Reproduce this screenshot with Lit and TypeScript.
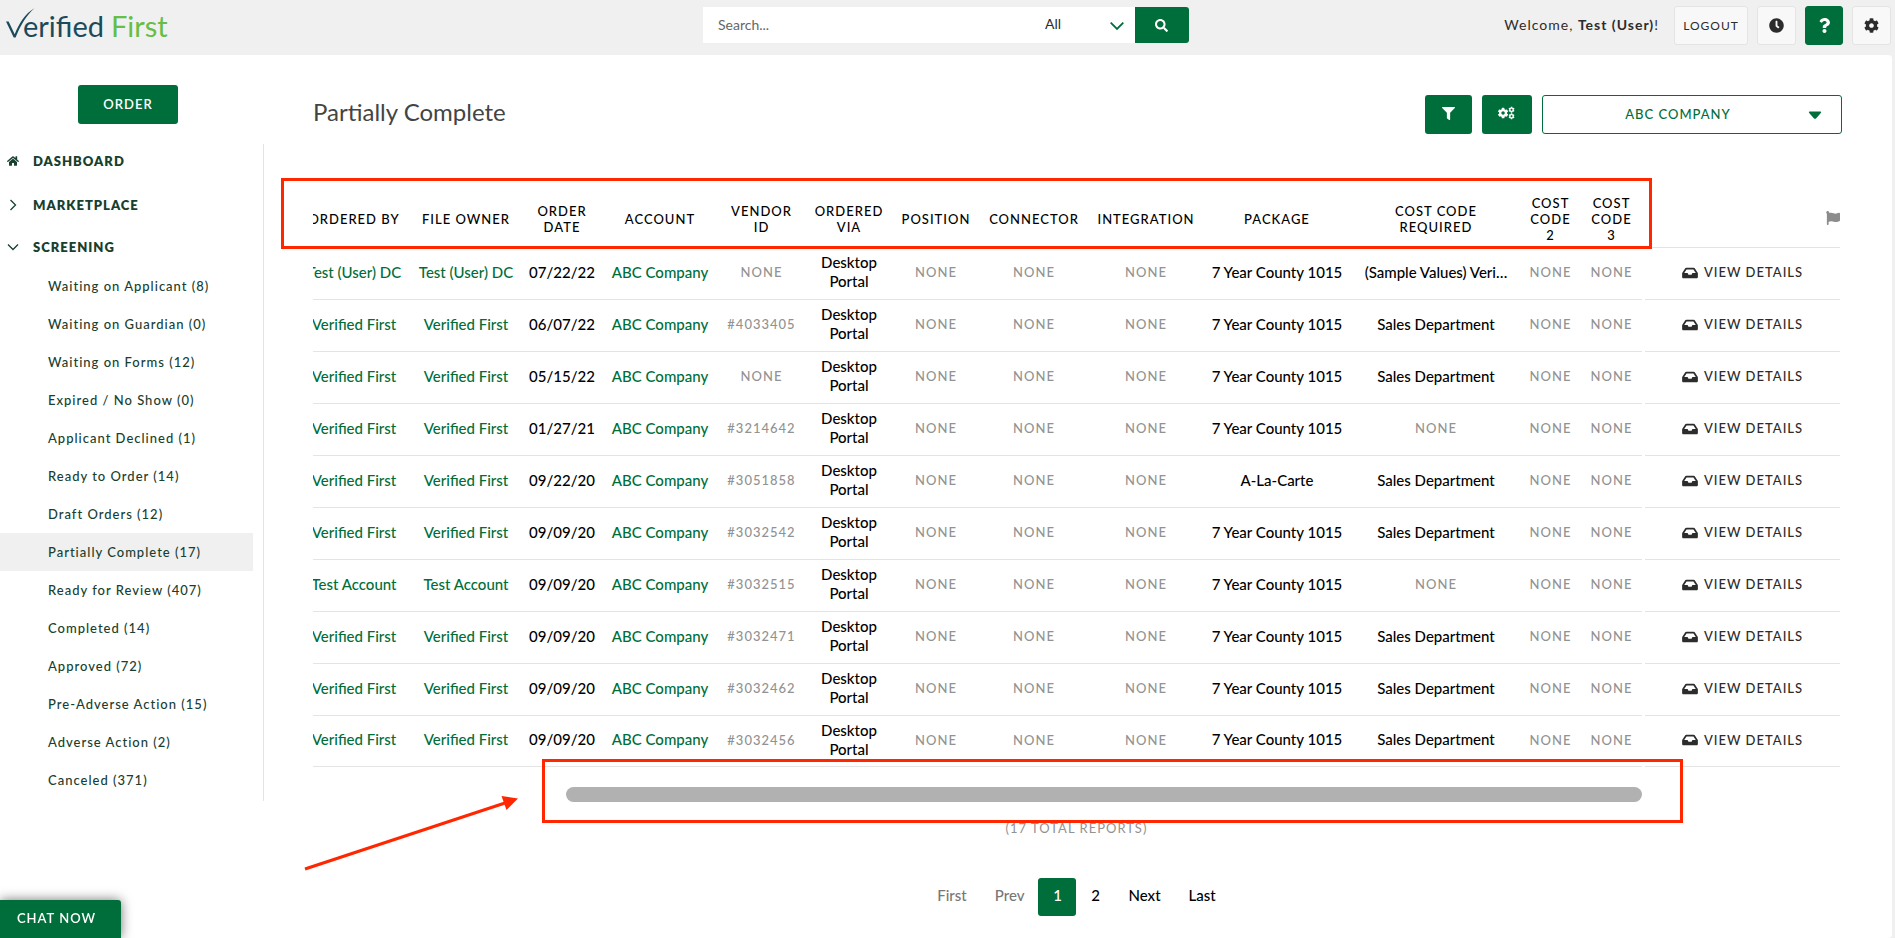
import { LitElement, html, css, svg } from "lit";
import { customElement, property } from "lit/decorators.js";
import { classMap } from "lit/directives/class-map.js";

const COG =
  "M487.4 315.7l-42.6-24.6c4.3-23.2 4.3-47 0-70.2l42.6-24.6c4.9-2.8 7.1-8.6 5.5-14-11.1-35.6-30-67.8-54.7-94.6-3.8-4.1-10-5.1-14.8-2.3L380.8 110c-17.9-15.4-38.5-27.3-60.8-35.1V25.8c0-5.6-3.9-10.5-9.4-11.7-36.7-8.2-74.3-7.8-109.2 0-5.5 1.2-9.4 6.1-9.4 11.7V75c-22.2 7.9-42.8 19.8-60.8 35.1L88.7 85.5c-4.9-2.8-11-1.9-14.8 2.3-24.7 26.7-43.6 58.9-54.7 94.6-1.7 5.4.6 11.2 5.5 14L67.3 221c-4.3 23.2-4.3 47 0 70.2l-42.6 24.6c-4.9 2.8-7.1 8.6-5.5 14 11.1 35.6 30 67.8 54.7 94.6 3.8 4.1 10 5.1 14.8 2.3l42.6-24.6c17.9 15.4 38.5 27.3 60.8 35.1v49.2c0 5.6 3.9 10.5 9.4 11.7 36.7 8.2 74.3 7.8 109.2 0 5.5-1.2 9.4-6.1 9.4-11.7v-49.2c22.2-7.9 42.8-19.8 60.8-35.1l42.6 24.6c4.9 2.8 11 1.9 14.8-2.3 24.7-26.7 43.6-58.9 54.7-94.6 1.5-5.5-.7-11.3-5.6-14.1zM256 336c-44.1 0-80-35.9-80-80s35.9-80 80-80 80 35.9 80 80-35.9 80-80 80z";

const ICONS: Record<string, { box: string; body: unknown }> = {
  search: {
    box: "0 0 512 512",
    body: svg`<path d="M505 442.7L405.3 343c-4.5-4.5-10.6-7-17-7H372c27.6-35.3 44-79.7 44-128C416 93.1 322.9 0 208 0S0 93.1 0 208s93.1 208 208 208c48.3 0 92.7-16.4 128-44v16.3c0 6.4 2.5 12.5 7 17l99.7 99.7c9.4 9.4 24.6 9.4 33.9 0l28.3-28.3c9.4-9.4 9.4-24.6.1-34zM208 336c-70.7 0-128-57.2-128-128 0-70.7 57.2-128 128-128 70.7 0 128 57.2 128 128 0 70.7-57.2 128-128 128z"/>`,
  },
  cog: { box: "0 0 512 512", body: svg`<path d=${COG} />` },
  cogs: {
    box: "0 0 640 512",
    body: svg`<g transform="translate(-14 52) scale(.8)"><path d=${COG} /></g>
      <g transform="translate(392 16) scale(.46)"><path d=${COG} /></g>
      <g transform="translate(392 262) scale(.46)"><path d=${COG} /></g>`,
  },
  clock: {
    box: "0 0 512 512",
    body: svg`<path d="M256,8C119,8,8,119,8,256S119,504,256,504,504,393,504,256,393,8,256,8Zm92.49,313h0l-20,25a16,16,0,0,1-22.49,2.5h0l-67-49.72a40,40,0,0,1-15-31.23V112a16,16,0,0,1,16-16h32a16,16,0,0,1,16,16V256l58,42.5A16,16,0,0,1,348.49,321Z"/>`,
  },
  question: {
    box: "0 0 384 512",
    body: svg`<path d="M202.021 0C122.202 0 70.503 32.703 29.914 91.026c-7.363 10.58-5.093 25.086 5.178 32.874l43.138 32.709c10.373 7.865 25.132 6.026 33.253-4.148 25.049-31.381 43.63-49.449 82.757-49.449 30.764 0 68.816 19.799 68.816 49.631 0 22.552-18.617 34.134-48.993 51.164-35.423 19.86-82.299 44.576-82.299 106.405V320c0 13.255 10.745 24 24 24h72.471c13.255 0 24-10.745 24-24v-5.773c0-42.86 125.268-44.645 125.268-160.627C377.504 66.256 286.902 0 202.021 0zM192 373.459c-38.196 0-69.271 31.075-69.271 69.271 0 38.195 31.075 69.27 69.271 69.27s69.271-31.075 69.271-69.271-31.075-69.27-69.271-69.27z"/>`,
  },
  filter: {
    box: "0 0 512 512",
    body: svg`<path d="M487.976 0H24.028C2.71 0-8.047 25.866 7.058 40.971L192 225.941V432c0 7.831 3.821 15.17 10.237 19.662l80 55.98C298.02 518.69 320 507.493 320 487.98V225.941l184.947-184.97C520.021 25.896 509.338 0 487.976 0z"/>`,
  },
  flag: {
    box: "0 0 512 512",
    body: svg`<path d="M349.565 98.783C295.978 98.783 251.721 64 184.348 64c-24.955 0-47.309 4.384-68.045 12.013a55.947 55.947 0 0 0 3.586-23.562C118.117 24.015 94.806 1.206 66.338.048 34.345-1.254 8 24.296 8 56c0 19.026 9.497 35.825 24 45.945V488c0 13.255 10.745 24 24 24h16c13.255 0 24-10.745 24-24v-94.4c28.311-12.064 63.582-22.122 114.435-22.122 53.588 0 97.844 34.783 165.217 34.783 48.169 0 86.667-16.294 122.505-40.858C506.84 359.452 512 349.571 512 339.045v-243.1c0-23.393-24.269-38.87-45.485-29.016-34.338 15.948-76.454 31.854-116.95 31.854z"/>`,
  },
  inbox: {
    box: "0 0 576 512",
    body: svg`<path d="M567.938 243.908L462.25 85.374A48.003 48.003 0 0 0 422.311 64H153.689a48 48 0 0 0-39.938 21.374L8.062 243.908A47.994 47.994 0 0 0 0 270.533V400c0 26.51 21.49 48 48 48h480c26.51 0 48-21.49 48-48V270.533a47.994 47.994 0 0 0-8.062-26.625zM162.252 128h251.497l85.333 128H376l-32 64H232l-32-64H76.918l85.334-128z"/>`,
  },
  home: {
    box: "0 0 576 512",
    body: svg`<path d="M280.37 148.26L96 300.11V464a16 16 0 0 0 16 16l112.06-.29a16 16 0 0 0 15.92-16V368a16 16 0 0 1 16-16h64a16 16 0 0 1 16 16v95.64a16 16 0 0 0 16 16.05L464 480a16 16 0 0 0 16-16V300L295.67 148.26a12.19 12.19 0 0 0-15.3 0zM571.6 251.47L488 182.56V44.05a12 12 0 0 0-12-12h-56a12 12 0 0 0-12 12v72.61L318.47 43a48 48 0 0 0-61 0L4.34 251.47a12 12 0 0 0-1.6 16.9l25.5 31A12 12 0 0 0 45.15 301l235.22-193.74a12.19 12.19 0 0 1 15.3 0L530.9 301a12 12 0 0 0 16.9-1.6l25.5-31a12 12 0 0 0-1.7-16.93z"/>`,
  },
  right: {
    box: "0 0 12 12",
    body: svg`<path d="M3.5 1L8.5 6L3.5 11" fill="none" stroke="currentColor" stroke-width="1.3"/>`,
  },
  down: {
    box: "0 0 12 12",
    body: svg`<path d="M1 3.5L6 8.5L11 3.5" fill="none" stroke="currentColor" stroke-width="1.3"/>`,
  },
  chevron: {
    box: "0 0 14 14",
    body: svg`<path d="M.7 3.7L7 10L13.3 3.7" fill="none" stroke="currentColor" stroke-width="1.8"/>`,
  },
  caret: {
    box: "0 0 14 14",
    body: svg`<path d="M1.5 3.500h11q1.200 .4 .3 1.500l-4.800 5.400q-1 .8 -2 0l-4.800 -5.400q-.9 -1.100 .3 -1.500z"/>`,
  },
};

@customElement("vf-icon")
class VfIcon extends LitElement {
  @property() name = "";
  static styles = css`
    :host {
      display: inline-flex;
      width: 14px;
      height: 14px;
      flex: none;
    }
    .glyph {
      width: 100%;
      height: 100%;
      fill: currentColor;
    }
  `;
  render() {
    const icon = ICONS[this.name];
    return html`<svg class="glyph" viewBox=${icon.box} aria-hidden="true">${icon.body}</svg>`;
  }
}

const shared = css`
  * {
    box-sizing: border-box;
  }
  a {
    color: inherit;
    text-decoration: none;
  }
  button,
  input,
  select {
    font: inherit;
    color: inherit;
    letter-spacing: inherit;
    margin: 0;
    border: 0;
    padding: 0;
    border-radius: 0;
    background: none;
    appearance: none;
    outline: none;
  }
`;

@customElement("vf-header")
class VfHeader extends LitElement {
  static styles = [
    shared,
    css`
      :host {
        display: grid;
        grid-template-columns: 1fr 486px 1fr;
        align-items: start;
        height: 55px;
        padding: 6px 3px 0 0;
        background: #f0f0f0;
        color: #2c2c2c;
      }
      .logo {
        display: flex;
        align-items: flex-start;
        padding-left: 5px;
        font-size: 29px;
        line-height: 40px;
        color: #1b4a5c;
        justify-self: start;
      }
      .mark {
        width: 30px;
        height: 34px;
        margin-right: -12px;
      }
      .first {
        color: #67bd45;
        padding-left: 7px;
      }
      .search {
        display: flex;
        height: 36px;
        margin-top: 1px;
        background: #fff;
        border-radius: 0 3px 3px 0;
        overflow: hidden;
      }
      .query {
        flex: 1;
        min-width: 0;
        padding: 0 15px 2px;
      }
      .query::placeholder {
        color: #666;
        opacity: 1;
      }
      .scope {
        display: grid;
        align-items: center;
        width: 104px;
      }
      .scope > * {
        grid-area: 1 / 1;
      }
      .scope select {
        height: 36px;
        padding: 0 30px 4px 14px;
      }
      .scope vf-icon {
        justify-self: end;
        margin: 2px 11px 0 0;
        color: #006e3a;
        pointer-events: none;
      }
      .go {
        display: grid;
        place-items: center;
        width: 54px;
        background: #006e3a;
        color: #fff;
      }
      .go vf-icon {
        width: 13px;
        height: 13px;
        margin-right: 2px;
      }
      .tools {
        display: flex;
        justify-content: flex-end;
        gap: 9px;
        padding-right: 1px;
        letter-spacing: 1px;
      }
      .welcome {
        line-height: 38px;
        padding-right: 6px;
      }
      .tool {
        display: grid;
        place-items: center;
        width: 39px;
        height: 39px;
        border: 1px solid #e4e4e4;
        border-radius: 3px;
        background: #f8f8f8;
      }
      .tool vf-icon {
        width: 15px;
        height: 15px;
      }
      .tool.wide {
        width: 74px;
        font-size: 12px;
      }
      .tool.help {
        width: 38px;
        background: #006e3a;
        border-color: #006e3a;
        color: #fff;
      }
    `,
  ];
  render() {
    return html`
      <a class="logo" href="#" aria-label="Verified First">
        <svg class="mark" viewBox="0 0 30 34" aria-hidden="true">
          <path d="M1 15.5H3.6L9.7 28.2C14 17.5 20 7.5 29.5 2.2C22 8.5 15.500 19 10.600 31.500H8.700Z" fill="#1b4a5c" />
        </svg>
        <span>erified</span><span class="first">First</span>
      </a>
      <form class="search" role="search">
        <input class="query" type="text" placeholder="Search..." aria-label="Search" />
        <div class="scope">
          <select aria-label="Search in">
            <option>All</option>
          </select>
          <vf-icon name="chevron"></vf-icon>
        </div>
        <button class="go" type="button" aria-label="Search"><vf-icon name="search"></vf-icon></button>
      </form>
      <div class="tools">
        <span class="welcome">Welcome, <b>Test (User)</b>!</span>
        <button class="tool wide">LOGOUT</button>
        <button class="tool" aria-label="History"><vf-icon name="clock"></vf-icon></button>
        <button class="tool help" aria-label="Help"><vf-icon name="question"></vf-icon></button>
        <button class="tool" aria-label="Settings"><vf-icon name="cog"></vf-icon></button>
      </div>
    `;
  }
}

const SCREENING: [string, number][] = [
  ["Waiting on Applicant", 8],
  ["Waiting on Guardian", 0],
  ["Waiting on Forms", 12],
  ["Expired / No Show", 0],
  ["Applicant Declined", 1],
  ["Ready to Order", 14],
  ["Draft Orders", 12],
  ["Partially Complete", 17],
  ["Ready for Review", 407],
  ["Completed", 14],
  ["Approved", 72],
  ["Pre-Adverse Action", 15],
  ["Adverse Action", 2],
  ["Canceled", 371],
];

@customElement("vf-sidebar")
class VfSidebar extends LitElement {
  @property() current = "";
  static styles = [
    shared,
    css`
      :host {
        display: flex;
        flex-direction: column;
        width: 264px;
        flex: none;
        padding-top: 30px;
        color: #17402f;
        letter-spacing: 1px;
        font-size: 13px;
        font-weight: 500;
      }
      .order {
        align-self: center;
        width: 100px;
        height: 39px;
        margin: 0 8px 20px 0;
        padding-bottom: 2px;
        border-radius: 3px;
        background: #006e3a;
        color: #fff;
        font-weight: 600;
      }
      nav {
        border-right: 1px solid #e4e4e4;
        padding-bottom: 2px;
      }
      .group {
        display: flex;
        align-items: center;
        gap: 14px;
        height: 44px;
        padding: 0 7px;
        font-weight: 800;
      }
      .group:first-child {
        height: 34px;
        margin-bottom: 5px;
      }
      .group.open {
        height: 40px;
      }
      .group vf-icon {
        width: 12px;
        height: 12px;
      }
      ul {
        list-style: none;
        margin: 0 10px 0 0;
        padding: 0;
      }
      .item {
        display: block;
        line-height: 38px;
        padding-left: 48px;
      }
      .item.active {
        background: #f0f0f0;
      }
    `,
  ];
  render() {
    return html`
      <button class="order">ORDER</button>
      <nav>
        <a class="group" href="#"><vf-icon name="home"></vf-icon>DASHBOARD</a>
        <a class="group" href="#"><vf-icon name="right"></vf-icon>MARKETPLACE</a>
        <a class="group open" href="#"><vf-icon name="down"></vf-icon>SCREENING</a>
        <ul>
          ${SCREENING.map(
            ([label, count]) => html`<li>
              <a class=${classMap({ item: true, active: label === this.current })} href="#">${label} (${count})</a>
            </li>`
          )}
        </ul>
      </nav>
    `;
  }
}

const COLUMNS: [string, string][] = [
  ["by", "ORDERED BY"],
  ["owner", "FILE OWNER"],
  ["date", "ORDER DATE"],
  ["account", "ACCOUNT"],
  ["vendor", "VENDOR ID"],
  ["via", "ORDERED VIA"],
  ["position", "POSITION"],
  ["connector", "CONNECTOR"],
  ["integration", "INTEGRATION"],
  ["package", "PACKAGE"],
  ["required", "COST CODE REQUIRED"],
  ["code", "COST CODE 2"],
  ["code", "COST CODE 3"],
];

const YEAR = "7 Year County 1015";
const SALES = "Sales Department";
// person, order date, vendor id, package, required cost code
const ROWS: string[][] = [
  ["Test (User) DC", "07/22/22", "", YEAR, "(Sample Values) Veri…"],
  ["Verified First", "06/07/22", "#4033405", YEAR, SALES],
  ["Verified First", "05/15/22", "", YEAR, SALES],
  ["Verified First", "01/27/21", "#3214642", YEAR, ""],
  ["Verified First", "09/22/20", "#3051858", "A-La-Carte", SALES],
  ["Verified First", "09/09/20", "#3032542", YEAR, SALES],
  ["Test Account", "09/09/20", "#3032515", YEAR, ""],
  ["Verified First", "09/09/20", "#3032471", YEAR, SALES],
  ["Verified First", "09/09/20", "#3032462", YEAR, SALES],
  ["Verified First", "09/09/20", "#3032456", YEAR, SALES],
];

@customElement("vf-reports")
class VfReports extends LitElement {
  static styles = [
    shared,
    css`
      :host {
        display: block;
        position: relative;
      }
      .tables {
        display: grid;
        grid-template-columns: minmax(0, 1fr) 195px;
        gap: 3px;
      }
      .scroller {
        display: flex;
        justify-content: flex-end;
        overflow: hidden;
      }
      table {
        border-collapse: separate;
        border-spacing: 0;
        table-layout: fixed;
        color: #000;
        flex: none;
      }
      .data {
        width: 1343px;
      }
      .actions {
        width: 100%;
      }
      .by { width: 110px; }
      .owner { width: 114px; }
      .date { width: 78px; }
      .account { width: 118px; }
      .vendor { width: 85px; }
      .via { width: 90px; }
      .position { width: 84px; }
      .connector { width: 112px; }
      .integration { width: 112px; }
      .package { width: 150px; }
      .required { width: 168px; }
      .code { width: 61px; }
      th,
      td {
        border-bottom: 1px solid #e4e4e4;
        text-align: center;
        vertical-align: middle;
      }
      th {
        height: 57px;
        padding: 0 6px;
        font-size: 13px;
        line-height: 16px;
        font-weight: 500;
        letter-spacing: 1px;
      }
      th.required {
        padding: 0 24px;
      }
      td {
        height: 52px;
        padding: 0 6px 3px;
        font-size: 15px;
        line-height: 19px;
        font-weight: 500;
      }
      tbody tr:last-child td {
        height: 51px;
      }
      td.line {
        white-space: nowrap;
        padding: 0 0 3px;
      }
      td.act {
        padding: 0;
      }
      .link {
        color: #006e3a;
      }
      .muted {
        color: #929292;
        font-size: 13px;
        letter-spacing: 1px;
      }
      .flag {
        text-align: right;
        color: #8c8c8c;
        padding: 0;
      }
      .view {
        display: inline-flex;
        align-items: center;
        gap: 6px;
        color: #2c2c2c;
        font-size: 13px;
        letter-spacing: 1px;
      }
      .view vf-icon {
        width: 16px;
      }
      .track {
        margin: 20px 198px 0 0;
      }
      .thumb {
        width: 81%;
        height: 15px;
        margin-left: auto;
        border-radius: 8px;
        background: #b1b1b1;
      }
      .total {
        margin: 17px 0 0;
        text-align: center;
        line-height: 18px;
        color: #929292;
        font-size: 13px;
        letter-spacing: 1px;
      }
      .pages {
        display: flex;
        justify-content: center;
        margin-top: 41px;
        color: #000;
        font-size: 15px;
        font-weight: 500;
      }
      .pages button {
        height: 38px;
        min-width: 38px;
        padding: 0 14px 4px;
        border-radius: 3px;
      }
      .pages .off {
        color: #777;
      }
      .pages .on {
        background: #006e3a;
        color: #fff;
      }
      .frame {
        position: absolute;
        border: 3px solid #ff2600;
        pointer-events: none;
      }
      .frame.head {
        left: -32px;
        right: 188px;
        top: -13px;
        height: 71px;
      }
      .frame.bar {
        left: 229px;
        right: 157px;
        top: 568px;
        height: 64px;
      }
      .arrow {
        position: absolute;
        left: -10px;
        top: 602px;
        width: 218px;
        height: 80px;
      }
    `,
  ];

  private none(value: string) {
    return value ? value : html`<span class="muted">NONE</span>`;
  }

  private row([person, date, vendor, pack, code]: string[]) {
    return html`<tr>
      <td class="line"><a class="link" href="#">${person}</a></td>
      <td class="line"><a class="link" href="#">${person}</a></td>
      <td class="line">${date}</td>
      <td class="line"><a class="link" href="#">ABC Company</a></td>
      <td class="line"><span class="muted">${vendor || "NONE"}</span></td>
      <td>Desktop Portal</td>
      <td>${this.none("")}</td>
      <td>${this.none("")}</td>
      <td>${this.none("")}</td>
      <td class="line">${pack}</td>
      <td class="line">${this.none(code)}</td>
      <td>${this.none("")}</td>
      <td>${this.none("")}</td>
    </tr>`;
  }

  render() {
    return html`
      <div class="tables">
        <div class="scroller">
          <table class="data">
            <thead>
              <tr>
                ${COLUMNS.map(([key, label]) => html`<th class=${key} scope="col">${label}</th>`)}
              </tr>
            </thead>
            <tbody>
              ${ROWS.map((r) => this.row(r))}
            </tbody>
          </table>
        </div>
        <table class="actions">
          <thead>
            <tr>
              <th class="flag" scope="col" aria-label="Flagged"><vf-icon name="flag"></vf-icon></th>
            </tr>
          </thead>
          <tbody>
            ${ROWS.map(
              () => html`<tr>
                <td class="act"><a class="view" href="#"><vf-icon name="inbox"></vf-icon>VIEW DETAILS</a></td>
              </tr>`
            )}
          </tbody>
        </table>
      </div>
      <div class="track"><div class="thumb"></div></div>
      <p class="total">(17 TOTAL REPORTS)</p>
      <nav class="pages" aria-label="Pages">
        <button class="off">First</button>
        <button class="off">Prev</button>
        <button class="on" aria-current="page">1</button>
        <button>2</button>
        <button>Next</button>
        <button>Last</button>
      </nav>
      <div class="frame head"></div>
      <div class="frame bar"></div>
      <svg class="arrow" viewBox="0 0 218 80" aria-hidden="true">
        <path d="M2 76L202 10" stroke="#ff2600" stroke-width="3" />
        <path d="M215 5.500L198.500 3L203.500 17Z" fill="#ff2600" />
      </svg>
    `;
  }
}

@customElement("app-root")
class AppRoot extends LitElement {
  static styles = [
    shared,
    css`
      :host {
        display: flex;
        flex-direction: column;
        min-height: 100vh;
        background: #f0f0f0;
        font-family: Lato, "Noto Sans", sans-serif;
        font-size: 14px;
      }
      .page {
        display: flex;
        flex: 1;
        align-items: flex-start;
        margin-right: 3px;
        background: #fff;
        border-radius: 0 4px 4px 0;
      }
      main {
        flex: 1;
        min-width: 0;
        padding: 40px 52px 22px 49px;
      }
      .bar {
        display: flex;
        align-items: center;
        gap: 10px;
        margin-bottom: 57px;
        margin-right: -2px;
      }
      h1 {
        flex: 1;
        margin: 0;
        padding-bottom: 6px;
        font-size: 24px;
        line-height: 33px;
        font-weight: 400;
        color: #444;
      }
      .square {
        display: grid;
        place-items: center;
        width: 47px;
        height: 39px;
        border-radius: 3px;
        background: #006e3a;
        color: #fff;
      }
      .square vf-icon {
        width: 13px;
        height: 13px;
        margin-bottom: 3px;
      }
      .square.wide {
        width: 50px;
      }
      .square.wide vf-icon {
        width: 17px;
        height: 14px;
        margin-right: 2px;
      }
      .company {
        display: grid;
        align-items: center;
        width: 300px;
        color: #006e3a;
      }
      .company > * {
        grid-area: 1 / 1;
      }
      .company select {
        height: 39px;
        padding: 0 28px 2px 0;
        border: 1px solid #006e3a;
        border-radius: 3px;
        text-align-last: center;
        letter-spacing: 1px;
        font-size: 13px;
        font-weight: 500;
      }
      .company vf-icon {
        justify-self: end;
        margin-right: 20px;
        pointer-events: none;
      }
      .chat {
        position: fixed;
        left: 0;
        bottom: 0;
        width: 121px;
        height: 38px;
        padding: 0 8px 2px 0;
        border-radius: 0 3px 0 0;
        background: #006e3a;
        color: #fff;
        font-weight: 600;
        font-size: 13px;
        letter-spacing: 1px;
        box-shadow: 0 0 12px rgba(0, 0, 0, 0.55);
      }
    `,
  ];
  render() {
    return html`
      <vf-header></vf-header>
      <div class="page">
        <vf-sidebar current="Partially Complete"></vf-sidebar>
        <main>
          <div class="bar">
            <h1>Partially Complete</h1>
            <button class="square" aria-label="Filter"><vf-icon name="filter"></vf-icon></button>
            <button class="square wide" aria-label="Table options"><vf-icon name="cogs"></vf-icon></button>
            <div class="company">
              <select aria-label="Company">
                <option>ABC COMPANY</option>
              </select>
              <vf-icon name="caret"></vf-icon>
            </div>
          </div>
          <vf-reports></vf-reports>
        </main>
      </div>
      <button class="chat">CHAT NOW</button>
    `;
  }
}
